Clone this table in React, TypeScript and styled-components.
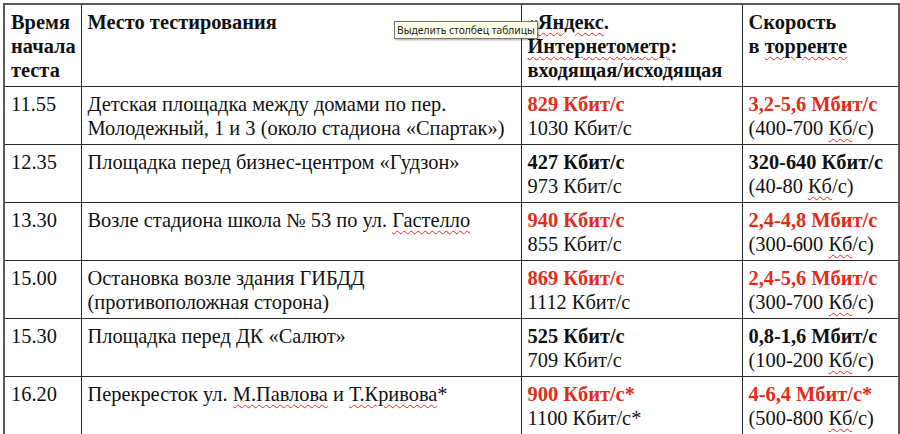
import React from "react";
import styled, { createGlobalStyle } from "styled-components";

const Global = createGlobalStyle`
  html, body { margin: 0; padding: 0; background: #ffffff; }
  body { font-family: "Liberation Serif", "Times New Roman", serif; }
`;

const Page = styled.div`
  position: relative;
  padding: 3px 0 0 3px;
  width: 900px;
  height: 434px;
  box-sizing: border-box;
  overflow: hidden;
`;

const Table = styled.table`
  border-collapse: collapse;
  table-layout: fixed;
  width: 895px;
  border: 2px solid #5a5a5a;
  font-family: "Liberation Serif", "Times New Roman", serif;
  font-size: 20.4px;
  line-height: 24px;
  color: #111;
`;

const Cell = styled.td<{ $head?: boolean }>`
  border: 1px solid #2a2a2a;
  padding: 5px 6px 4px 6px;
  vertical-align: top;
  text-align: left;
  font-weight: ${(p) => (p.$head ? 700 : 400)};
  white-space: nowrap;
  overflow: hidden;
`;

const Line = styled.div`
  display: block;
`;

const Value = styled.span<{ $red?: boolean }>`
  display: inline-block;
  font-weight: 700;
  color: ${(p) => (p.$red ? "#e12c1a" : "#111")};
`;

const Spell = styled.span`
  text-decoration-line: underline;
  text-decoration-style: wavy;
  text-decoration-color: #e02a2a;
  text-decoration-thickness: 1px;
  text-underline-offset: 3px;
`;

const Tooltip = styled.div`
  position: absolute;
  left: 394px;
  top: 21px;
  height: 18px;
  padding: 0 2px;
  box-sizing: border-box;
  background: #ffffe6;
  border: 1px solid #767676;
  box-shadow: 1px 1px 2px rgba(0, 0, 0, 0.35);
  font-family: "Noto Sans", "Open Sans", sans-serif;
  font-size: 10.3px;
  line-height: 16px;
  color: #222;
  white-space: nowrap;
`;

type Row = {
  time: string;
  place: React.ReactNode[];
  y1: string;
  y2: string;
  t1: string;
  t2: string;
  red: boolean;
};

const Kb = ({ range }: { range: string }) => (
  <>
    ({range} <Spell>Кб</Spell>/с)
  </>
);

const rows: Row[] = [
  {
    time: "11.55",
    place: ["Детская площадка между домами по пер.", "Молодежный, 1 и 3 (около стадиона «Спартак»)"],
    y1: "829 Кбит/с",
    y2: "1030 Кбит/с",
    t1: "3,2-5,6 Мбит/с",
    t2: "400-700",
    red: true,
  },
  {
    time: "12.35",
    place: ["Площадка перед бизнес-центром «Гудзон»"],
    y1: "427 Кбит/с",
    y2: "973 Кбит/с",
    t1: "320-640 Кбит/с",
    t2: "40-80",
    red: false,
  },
  {
    time: "13.30",
    place: [
      <>
        Возле стадиона школа № 53 по ул. <Spell>Гастелло</Spell>
      </>,
    ],
    y1: "940 Кбит/с",
    y2: "855 Кбит/с",
    t1: "2,4-4,8 Мбит/с",
    t2: "300-600",
    red: true,
  },
  {
    time: "15.00",
    place: ["Остановка возле здания ГИБДД", "(противоположная сторона)"],
    y1: "869 Кбит/с",
    y2: "1112 Кбит/с",
    t1: "2,4-5,6 Мбит/с",
    t2: "300-700",
    red: true,
  },
  {
    time: "15.30",
    place: ["Площадка перед ДК «Салют»"],
    y1: "525 Кбит/с",
    y2: "709 Кбит/с",
    t1: "0,8-1,6 Мбит/с",
    t2: "100-200",
    red: false,
  },
  {
    time: "16.20",
    place: [
      <>
        Перекресток ул. <Spell>М.Павлова</Spell> и <Spell>Т.Кривова</Spell>*
      </>,
    ],
    y1: "900 Кбит/с*",
    y2: "1100 Кбит/с*",
    t1: "4-6,4 Мбит/с*",
    t2: "500-800",
    red: true,
  },
];

export default function App() {
  return (
    <Page>
      <Global />
      <Table>
        <colgroup>
          <col style={{ width: 77 }} />
          <col style={{ width: 440 }} />
          <col style={{ width: 221 }} />
          <col style={{ width: 157 }} />
        </colgroup>
        <thead>
          <tr>
            <Cell as="th" $head>
              <Line>Время</Line>
              <Line>начала</Line>
              <Line>теста</Line>
            </Cell>
            <Cell as="th" $head>
              <Line>Место тестирования</Line>
            </Cell>
            <Cell as="th" $head>
              <Line>
                «<Spell>Яндекс</Spell>.
              </Line>
              <Line>
                <Spell>Интернетометр</Spell>:
              </Line>
              <Line>входящая/исходящая</Line>
            </Cell>
            <Cell as="th" $head>
              <Line>Скорость</Line>
              <Line>
                в <Spell>торренте</Spell>
              </Line>
            </Cell>
          </tr>
        </thead>
        <tbody>
          {rows.map((r) => (
            <tr key={r.time}>
              <Cell>
                <Line>{r.time}</Line>
                <Line>&nbsp;</Line>
              </Cell>
              <Cell>
                {r.place.map((p, i) => (
                  <Line key={i}>{p}</Line>
                ))}
              </Cell>
              <Cell>
                <Line>
                  <Value $red={r.red}>{r.y1}</Value>
                </Line>
                <Line>{r.y2}</Line>
              </Cell>
              <Cell>
                <Line>
                  <Value $red={r.red}>{r.t1}</Value>
                </Line>
                <Line>
                  <Kb range={r.t2} />
                </Line>
              </Cell>
            </tr>
          ))}
        </tbody>
      </Table>
      <Tooltip>Выделить столбец таблицы</Tooltip>
    </Page>
  );
}
